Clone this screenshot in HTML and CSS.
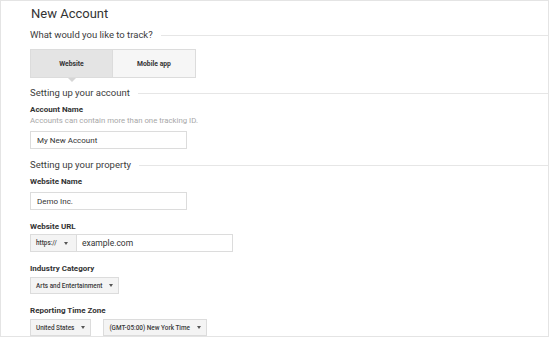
FILE: index.html
```html
<!DOCTYPE html>
<html lang="en">
<head>
    <meta charset="UTF-8">
    <meta name="viewport" content="width=device-width, initial-scale=1.0">
    <title>New Account</title>
    <link rel="stylesheet" href="styles.css">
</head>
<body>
    <div class="frame">
        <h1 class="title">New Account</h1>

        <div class="section-head first">
            <span>What would you like to track?</span>
        </div>

        <div class="tabs">
            <div class="tab active">Website</div>
            <div class="tab">Mobile app</div>
        </div>

        <div class="section-head">
            <span>Setting up your account</span>
        </div>

        <div class="field first">
            <div class="label">Account Name</div>
            <div class="hint">Accounts can contain more than one tracking ID.</div>
            <div class="input name-input">My New Account</div>
        </div>

        <div class="section-head">
            <span>Setting up your property</span>
        </div>

        <div class="field first">
            <div class="label">Website Name</div>
            <div class="input name-input">Demo Inc.</div>
        </div>

        <div class="field">
            <div class="label">Website URL</div>
            <div class="url-row">
                <div class="select protocol">https:// <span class="caret"></span></div>
                <div class="input url-input">example.com</div>
            </div>
        </div>

        <div class="field">
            <div class="label">Industry Category</div>
            <div class="row">
                <div class="select">Arts and Entertainment <span class="caret"></span></div>
            </div>
        </div>

        <div class="field">
            <div class="label">Reporting Time Zone</div>
            <div class="row zone-row">
                <div class="select">United States <span class="caret"></span></div>
                <div class="select">(GMT-05:00) New York Time <span class="caret"></span></div>
            </div>
        </div>
    </div>
</body>
</html>
```

FILE: styles.css
```css
* {
    margin: 0;
    padding: 0;
    box-sizing: border-box;
}

body {
    font-family: Roboto, "Liberation Sans", sans-serif;
    background: #fff;
    color: #333;
}

.frame {
    width: 549px;
    height: 337px;
    border: 1px solid #e4e4e4;
    padding: 5px 0 0 29px;
    overflow: hidden;
}

.title {
    font-size: 13px;
    font-weight: 400;
    line-height: 16px;
    color: #333;
    padding-left: 1px;
}

.section-head {
    display: flex;
    align-items: center;
    gap: 8px;
    font-size: 9.5px;
    line-height: 12px;
    color: #3c3c3c;
    margin-top: 9px;
}

.section-head.first {
    margin-top: 7px;
}

.section-head::after {
    content: "";
    flex: 1;
    height: 1px;
    background: #e6e6e6;
    margin-top: 1px;
}

.tabs {
    display: flex;
    margin-top: 8px;
}

.tab {
    position: relative;
    width: 83px;
    height: 29px;
    display: flex;
    align-items: center;
    justify-content: center;
    font-size: 6.8px;
    font-weight: 700;
    color: #333;
    background: #f6f6f6;
    border: 1px solid #dcdcdc;
}

.tab + .tab {
    border-left: none;
}

.tab.active {
    background: #e4e4e4;
}

.tab.active::after {
    content: "";
    position: absolute;
    left: 37px;
    bottom: -5px;
    border-left: 4px solid transparent;
    border-right: 4px solid transparent;
    border-top: 4px solid #d6d6d6;
}

.field {
    margin-top: 12px;
}

.field.first {
    margin-top: 6px;
}

.label {
    font-size: 8px;
    font-weight: 700;
    line-height: 10px;
    color: #333;
}

.hint {
    font-size: 7.8px;
    line-height: 10px;
    color: #a8a8a8;
    margin-top: 1px;
}

.input {
    height: 18px;
    display: flex;
    align-items: center;
    padding-left: 6px;
    border: 1px solid #dcdcdc;
    background: #fff;
    font-size: 8px;
    color: #333;
    margin-top: 5px;
}

.name-input {
    width: 157px;
}

.field.first .input {
    margin-bottom: 10px;
}

.url-row {
    display: flex;
    margin-top: 2px;
}

.row {
    display: flex;
    margin-top: 3px;
}

.zone-row {
    gap: 12px;
}

.url-row .input {
    margin-top: 0;
}

.url-input {
    width: 156px;
    border-left: none;
    font-size: 8.5px;
    padding-left: 5px;
}

.select {
    height: 17px;
    display: flex;
    align-items: center;
    gap: 6px;
    padding: 0 5px;
    background: #f4f4f4;
    border: 1px solid #dcdcdc;
    font-size: 6.4px;
    font-weight: 500;
    color: #3a3a3a;
    white-space: nowrap;
}

.protocol {
    width: 47px;
    height: 18px;
}

.caret {
    border-left: 2.5px solid transparent;
    border-right: 2.5px solid transparent;
    border-top: 3px solid #555;
    margin-left: 1px;
}
```
